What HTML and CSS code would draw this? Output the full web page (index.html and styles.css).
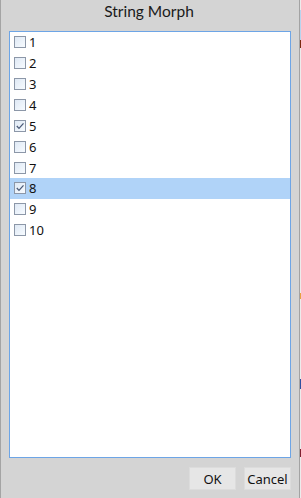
FILE: index.html
```html
<!DOCTYPE html>
<html>
<head>
<meta charset="utf-8">
<link rel="stylesheet" href="styles.css">
</head>
<body>
<div class="window">
  <div class="edge-left"></div>
  <div class="dialog">
    <div class="title">String Morph</div>
    <div class="listbox">
      <div class="row"><span class="cb"></span><span class="label">1</span></div>
      <div class="row"><span class="cb"></span><span class="label">2</span></div>
      <div class="row"><span class="cb"></span><span class="label">3</span></div>
      <div class="row"><span class="cb"></span><span class="label">4</span></div>
      <div class="row"><span class="cb checked"><svg viewBox="0 0 12 12" width="12" height="12"><path d="M2.8 6 L5 8.4 L9.5 3.4" fill="none" stroke="#4a5a78" stroke-width="1.3"/></svg></span><span class="label">5</span></div>
      <div class="row"><span class="cb"></span><span class="label">6</span></div>
      <div class="row"><span class="cb"></span><span class="label">7</span></div>
      <div class="row selected"><span class="cb checked"><svg viewBox="0 0 12 12" width="12" height="12"><path d="M2.8 6 L5 8.4 L9.5 3.4" fill="none" stroke="#4a5a78" stroke-width="1.3"/></svg></span><span class="label">8</span></div>
      <div class="row"><span class="cb"></span><span class="label">9</span></div>
      <div class="row"><span class="cb"></span><span class="label">10</span></div>
    </div>
    <div class="buttons">
      <button class="btn">OK</button>
      <button class="btn">Cancel</button>
    </div>
  </div>
  <div class="edge-right"></div>
  <div class="behind">
    <span class="speck s1"></span>
    <span class="speck s2"></span>
    <span class="speck s3"></span>
    <span class="speck s4"></span>
    <span class="speck s5"></span>
  </div>
</div>
</body>
</html>
```

FILE: styles.css
```css
html, body {
  margin: 0;
  padding: 0;
  background: #d4d4d4;
}
.window {
  display: flex;
  width: 301px;
  height: 498px;
  font-family: "Noto Sans", "Open Sans", sans-serif;
  color: #111;
}
.edge-left {
  width: 1px;
  background: #a4a4a4;
}
.dialog {
  flex: 1;
  display: flex;
  flex-direction: column;
  background: #d4d4d4;
  padding: 0 8px 8px 8px;
}
.title {
  height: 31px;
  display: flex;
  align-items: center;
  justify-content: center;
  font-family: "Lato", "Noto Sans", sans-serif;
  font-size: 15.5px;
  line-height: 1;
  padding-bottom: 7px;
  padding-right: 2px;
  box-sizing: border-box;
  color: #1a1a1a;
}
.listbox {
  height: 427px;
  box-sizing: border-box;
  border: 1px solid #6da5e6;
  background: #fff;
  display: flex;
  flex-direction: column;
}
.row {
  height: 20.86px;
  flex: none;
  display: flex;
  align-items: center;
  padding-left: 4px;
  gap: 3px;
  font-size: 13px;
}
.row.selected {
  background: #b0d3f8;
}
.cb {
  width: 12px;
  height: 12px;
  box-sizing: border-box;
  border: 1px solid #8c97a8;
  background: linear-gradient(135deg, #dfe9f5, #f7fbff);
  position: relative;
  display: block;
}
.cb svg {
  position: absolute;
  left: -1px;
  top: -1px;
}
.label {
  line-height: 1;
  padding-top: 1px;
}
.buttons {
  display: flex;
  justify-content: flex-end;
  gap: 8px;
  margin-top: 9px;
}
.btn {
  width: 47px;
  height: 23px;
  box-sizing: border-box;
  border: 1px solid #dcdcdc;
  background: #e6e6e6;
  font-family: "Noto Sans", "Open Sans", sans-serif;
  font-size: 13px;
  color: #111;
  padding: 0;
  margin: 0;
}
.edge-right {
  width: 1px;
  background: #a3a3a3;
}
.behind {
  width: 1px;
  background: #ececec;
  display: flex;
  flex-direction: column;
}
.speck {
  display: block;
  width: 1px;
}
.s1 { height: 30px; margin-top: 10px; background: #b8d4ee; }
.s2 { height: 8px; background: #7a2a10; }
.s3 { height: 6px; margin-top: 245px; background: #e8a040; }
.s4 { height: 10px; margin-top: 80px; background: #3050a0; }
.s5 { height: 8px; margin-top: 60px; background: #802030; }
```
